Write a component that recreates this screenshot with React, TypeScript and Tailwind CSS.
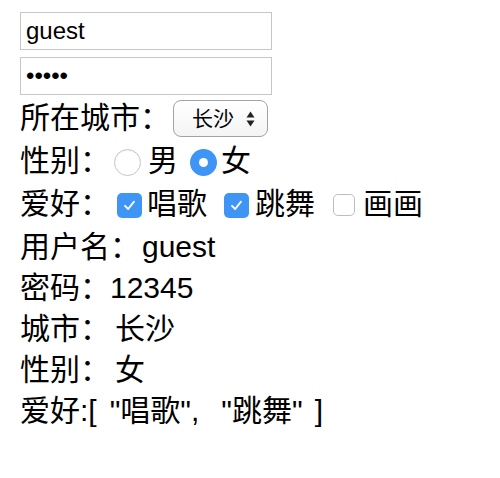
import React from "react";

const font = { fontFamily: '"Liberation Sans", "Noto Sans CJK SC", sans-serif' };

function RadioOff() {
  return <span className="inline-block w-[27px] h-[27px] rounded-full border border-[#c4c4c4] bg-white shadow-[inset_0_1px_1px_rgba(0,0,0,0.06)]" />;
}
function RadioOn() {
  return (
    <span className="inline-flex w-[27px] h-[27px] rounded-full bg-[#3f95f6] items-center justify-center">
      <span className="block w-[9px] h-[9px] rounded-full bg-white" />
    </span>
  );
}
function CheckOn() {
  return (
    <span className="inline-flex w-[25px] h-[25px] rounded-[5px] bg-[#3f95f6] items-center justify-center">
      <svg width="15" height="15" viewBox="0 0 15 15" fill="none">
        <path d="M3 7.8 L6.2 11 L12 3.6" stroke="white" strokeWidth="1.8" strokeLinecap="round" strokeLinejoin="round" />
      </svg>
    </span>
  );
}
function CheckOff() {
  return <span className="inline-block w-[22px] h-[22px] rounded-[5px] border border-[#bdbdbd] bg-white" />;
}

export default function App() {
  return (
    <div className="bg-white w-[500px] h-[478px] pl-[20px] pt-[12px] text-black text-[30px] leading-none" style={font}>
      <input
        readOnly
        value="guest"
        className="block w-[252px] h-[38px] border border-[#c6c6c6] pl-[5px] text-[24px] text-black outline-none"
        style={font}
      />
      <input
        readOnly
        type="password"
        value="12345"
        className="block mt-[7px] w-[252px] h-[38px] border border-[#c6c6c6] pl-[5px] text-[24px] text-black outline-none"
        style={font}
      />
      <div className="mt-[2px] h-[42px] flex items-center">
        <span>所在城市：</span>
        <span className="ml-[3px] relative inline-flex w-[95px] h-[37px] rounded-[8px] border border-[#a3a3a3] bg-gradient-to-b from-white to-[#f4f4f4] items-center">
          <span className="ml-[18px] text-[21px]">长沙</span>
          <svg className="absolute right-[12px] top-[10px]" width="9" height="16" viewBox="0 0 9 16">
            <path d="M4.5 0.5 L8.5 6.5 L0.5 6.5 Z" fill="#222" />
            <path d="M4.5 15.5 L8.5 9.5 L0.5 9.5 Z" fill="#222" />
          </svg>
        </span>
      </div>
      <div className="h-[43px] flex items-center">
        <span>性别：</span>
        <span className="ml-[4px] flex mt-[3px]"><RadioOff /></span>
        <span className="ml-[7px]">男</span>
        <span className="ml-[12px] flex mt-[3px]"><RadioOn /></span>
        <span className="ml-[4px]">女</span>
      </div>
      <div className="h-[44px] flex items-center">
        <span>爱好：</span>
        <span className="ml-[7px] flex mt-[2px]"><CheckOn /></span>
        <span className="ml-[5px]">唱歌</span>
        <span className="ml-[17px] flex mt-[2px]"><CheckOn /></span>
        <span className="ml-[6px]">跳舞</span>
        <span className="ml-[18px] flex mt-[2px]"><CheckOff /></span>
        <span className="ml-[8px]">画画</span>
      </div>
      <div className="h-[41px] flex items-center">
        <span>用户名：</span>
        <span className="ml-[2px]">guest</span>
      </div>
      <div className="h-[41px] flex items-center">
        <span>密码：</span>
        <span>12345</span>
      </div>
      <div className="h-[41px] flex items-center">
        <span>城市：</span>
        <span className="ml-[5px]">长沙</span>
      </div>
      <div className="h-[41px] flex items-center">
        <span>性别：</span>
        <span className="ml-[5px]">女</span>
      </div>
      <div className="h-[41px] flex items-center">
        <span>爱好:[</span>
        <span className="ml-[13px] whitespace-pre">{'"唱歌",'}</span>
        <span className="ml-[22px] whitespace-pre">{'"跳舞"'}</span>
        <span className="ml-[12px]">]</span>
      </div>
    </div>
  );
}
